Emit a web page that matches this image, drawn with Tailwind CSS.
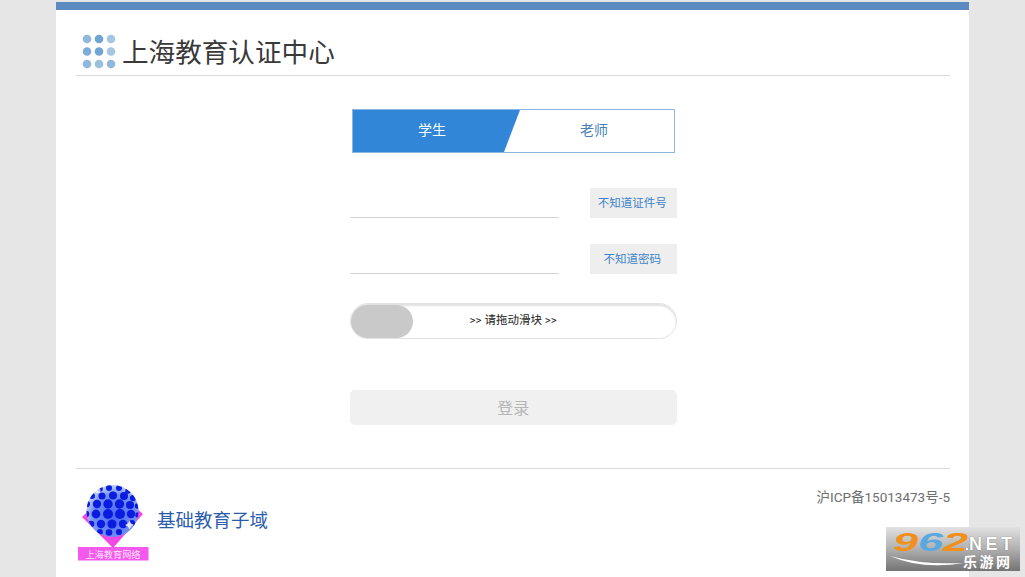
<!DOCTYPE html>
<html lang="zh">
<head>
<meta charset="utf-8">
<title>上海教育认证中心</title>
<script src="https://cdn.jsdelivr.net/npm/@tailwindcss/browser@4"></script>
</head>
<body class="bg-[#e6e6e6] font-['Roboto','Noto_Sans_CJK_SC',sans-serif] overflow-hidden">
<div class="relative h-[577px] w-[1025px] overflow-hidden pt-[2px]">
  <main class="ml-[56px] h-[575px] w-[913px] bg-white">
    <div class="h-2 bg-[#5a8abf]"></div>
    <div class="pr-[19px] pl-5">
      <header class="flex h-[66px] items-center border-b border-[#d9d9d9] pl-[6px] pt-[19px]">
        <svg class="h-[36px] w-[36px] shrink-0" viewBox="0 0 36 36">
          <circle cx="5" cy="5" r="4.300" fill="#8fb8dc"/><circle cx="17" cy="5" r="4.300" fill="#6ea5d3"/><circle cx="29" cy="5" r="4.300" fill="#a4c6e2"/>
          <circle cx="5" cy="17.500" r="4.300" fill="#7fadd7"/><circle cx="17" cy="17.500" r="4.300" fill="#6ea5d3"/><circle cx="29" cy="17.500" r="4.300" fill="#a4c6e2"/>
          <circle cx="5" cy="30" r="4.300" fill="#8fb8dc"/><circle cx="17" cy="30" r="4.300" fill="#9ac0df"/><circle cx="29" cy="30" r="4.300" fill="#8fb8dc"/>
        </svg>
        <h1 class="mt-[2px] ml-[4px] text-[26.6px] leading-none font-normal text-[#3a3a3a]">上海教育认证中心</h1>
      </header>
      <section class="ml-[274px] w-[327px] pt-[33px]">
        <div class="relative ml-[2px] flex h-[44px] w-[323px] border border-[#8db6e2] bg-white text-sm">
          <div class="flex h-full w-[167px] items-center justify-center pr-[9px] pb-[2px] text-white bg-[#3286d8] [clip-path:polygon(0_0,100%_0,151px_100%,0_100%)]">学生</div>
          <div class="flex flex-1 items-center justify-center pr-[6px] pb-[2px] text-[#4a7fb5]">老师</div>
        </div>
        <div class="mt-[35px] flex items-end justify-between">
          <div class="h-[30px] w-[209px] border-b border-[#d4d4d4]"></div>
          <button class="mr-[0.5px] h-[30px] w-[86.500px] bg-[#eeeeee] pt-[2px] pr-[2px] text-[11.5px] text-[#3b84c9]">不知道证件号</button>
        </div>
        <div class="mt-[26px] flex items-end justify-between">
          <div class="h-[30px] w-[209px] border-b border-[#d4d4d4]"></div>
          <button class="mr-[0.5px] h-[30px] w-[86.500px] bg-[#eeeeee] pt-[2px] pr-[2px] text-[11.5px] text-[#3b84c9]">不知道密码</button>
        </div>
        <div class="relative mt-[29px] flex h-[36px] w-[326.500px] items-center justify-center rounded-full border border-[#e2e2e2] bg-white text-[11.5px] text-[#222222] shadow-[inset_0_2px_2px_rgba(0,0,0,0.12)]">
          <div class="absolute top-[1px] left-0 h-[33px] w-[62px] rounded-full bg-[#c9c9c9]"></div>
          <span>&gt;&gt; 请拖动滑块 &gt;&gt;</span>
        </div>
        <button class="mt-[51px] h-[35px] w-[326.500px] rounded-[5px] bg-[#f0f0f0] pt-[2px] text-base text-[#b5b5b5]">登录</button>
      </section>
      <footer class="mt-[43px] flex h-[108px] items-start justify-between border-t border-[#d9d9d9]">
        <div class="flex items-start">
          <svg class="mt-[15px] h-[77px] w-[74px] shrink-0" viewBox="0 0 74 77">
            <defs>
              <clipPath id="ball"><circle cx="36.500" cy="27" r="26"/></clipPath>
              <radialGradient id="sphere" cx="0.550" cy="0.600" r="0.650"><stop offset="0" stop-color="#4a66f4"/><stop offset="0.650" stop-color="#7490f4"/><stop offset="1" stop-color="#d8e2ff"/></radialGradient>
            </defs>
            <path d="M6 33 L37 3 L67 30 L37 64 Z" fill="#f048e0"/>
            <circle cx="36.500" cy="27" r="26" fill="url(#sphere)"/>
            <g clip-path="url(#ball)" fill="#0a1ce0">
              <circle cx="24" cy="5" r="2.800"/><circle cx="33" cy="4" r="3"/><circle cx="43" cy="4" r="3"/><circle cx="52" cy="7" r="2.800"/>
              <circle cx="16" cy="12" r="3"/><circle cx="26" cy="12" r="3.600"/><circle cx="37" cy="11.500" r="4"/><circle cx="48" cy="12" r="4"/><circle cx="57" cy="14" r="3.100"/>
              <circle cx="11" cy="20" r="3.100"/><circle cx="21" cy="20" r="4.200"/><circle cx="32" cy="20" r="4.700"/><circle cx="43.500" cy="20" r="4.700"/><circle cx="54" cy="21" r="4"/><circle cx="61.500" cy="22" r="2.700"/>
              <circle cx="10" cy="30" r="3.300"/><circle cx="20" cy="30" r="4.400"/><circle cx="32" cy="30" r="5"/><circle cx="44" cy="30" r="5"/><circle cx="55" cy="30" r="4.200"/><circle cx="62" cy="31" r="2.700"/>
              <circle cx="15" cy="40" r="3.300"/><circle cx="25" cy="40" r="4.200"/><circle cx="36" cy="40" r="4.600"/><circle cx="47" cy="40" r="4.200"/><circle cx="56" cy="39" r="3.100"/>
              <circle cx="24" cy="48" r="2.900"/><circle cx="33" cy="48.500" r="3.300"/><circle cx="43" cy="48" r="3.100"/>
            </g>
            <path d="M49 41 l3 -1.500 l1.500 -3 l1.500 3 l3 1.500 l-3 1.500 l-1.500 3 l-1.500 -3 Z" fill="#ffffff" opacity="0.850"/>
            <circle cx="22" cy="6.500" r="2.500" fill="#ffffff" opacity="0.700"/>
            <rect x="2" y="63" width="70.500" height="13.500" fill="#f458ec"/>
            <text x="37" y="73.500" text-anchor="middle" font-size="9.200" fill="#ffffff" opacity="0.850" font-family="'Noto Sans CJK SC'">上海教育网络</text>
          </svg>
          <span class="ml-[7px] mt-[40px] text-[18.5px] leading-[24px] text-[#2a5cab]">基础教育子域</span>
        </div>
        <div class="pt-[19px] text-[13.5px] leading-[18px] text-[#6e6e6e]">沪ICP备15013473号-5</div>
      </footer>
    </div>
  </main>
  <div class="absolute top-[527px] left-[886px] h-[44px] w-[134px] overflow-hidden bg-gradient-to-b from-[#e2e2e2] via-[#b0b0b0] to-[#747474]">
    <span class="absolute top-[0px] left-[7px] origin-left scale-x-[1.8] font-['Liberation_Sans',sans-serif] text-[25px] leading-[30px] font-bold italic text-[#f0901e]">9<span class="text-[#5aa8e0]">6</span>2</span>
    <span class="absolute top-[6px] left-[83px] font-['Liberation_Sans',sans-serif] text-[18px] leading-[22px] font-bold tracking-[3.5px] text-white [text-shadow:0_0_1px_#555555]">NET</span>
    <span class="absolute top-[21px] left-[80px] h-[2px] w-[2px] bg-white"></span>
    <span class="absolute top-[27px] left-[77px] text-[14px] leading-[17px] font-bold tracking-[2.5px] text-white">乐游网</span>
    <svg class="absolute top-[28px] left-[4px] h-[14px] w-[74px]" viewBox="0 0 74 14"><path d="M0 1 Q32 15 74 8 Q32 10 0 1Z" fill="#ffffff"/></svg>
  </div>
</div>
</body>
</html>
